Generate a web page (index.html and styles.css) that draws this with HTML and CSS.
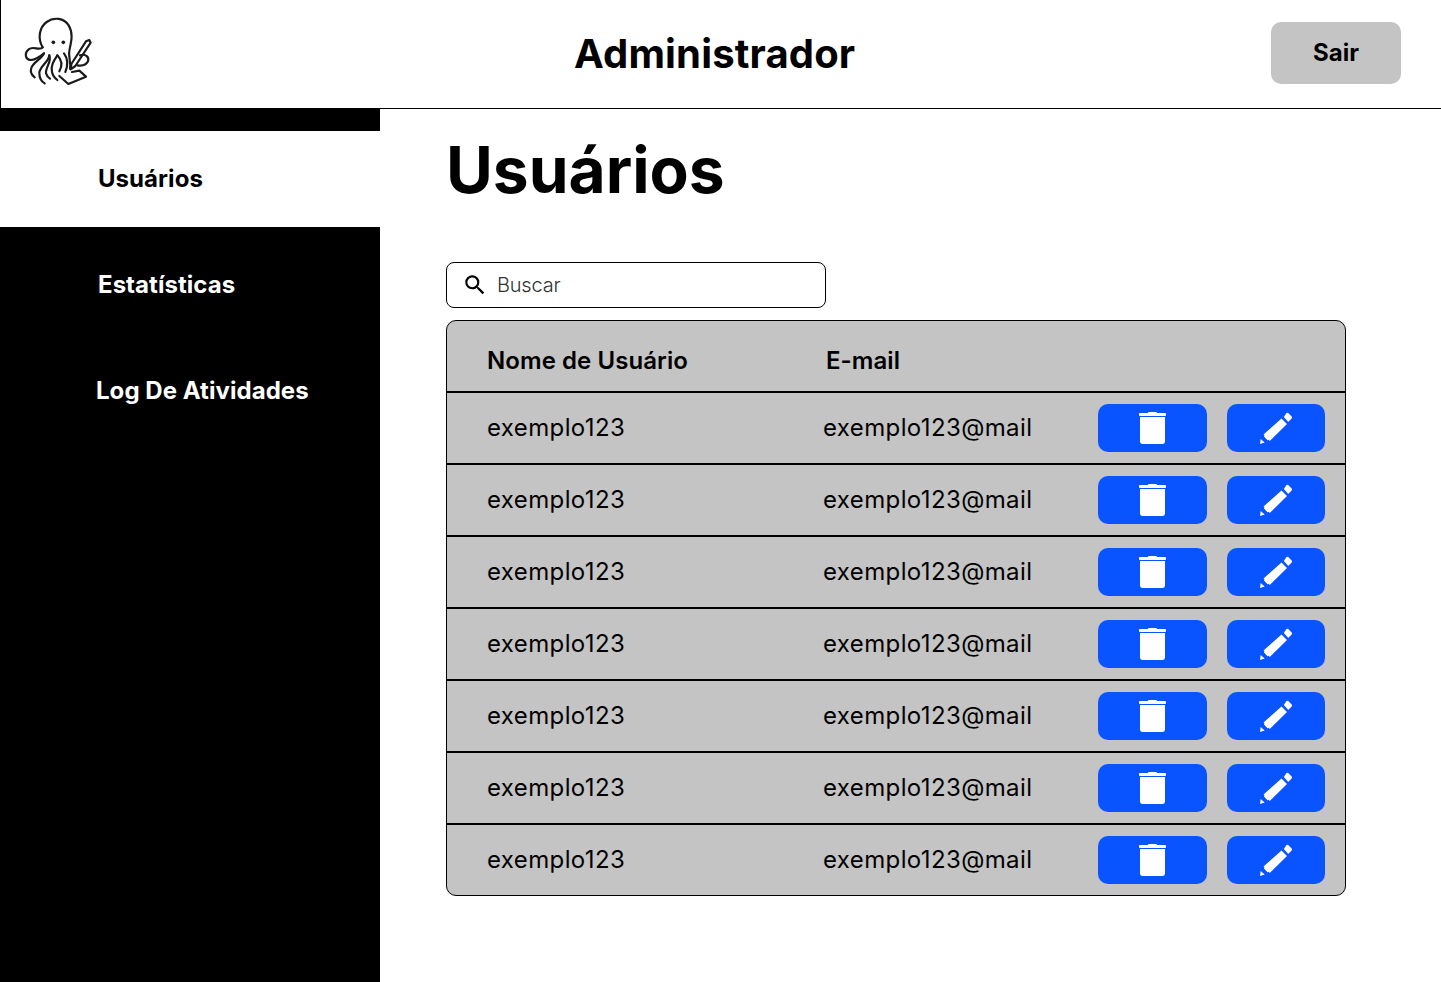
FILE: index.html
```html
<!DOCTYPE html>
<html lang="pt-BR">
<head>
  <meta charset="UTF-8">
  <title>Administrador</title>
  <link rel="stylesheet" href="styles.css">
</head>
<body>
  <svg class="sprites" width="0" height="0">
    <symbol id="icon-trash" viewBox="0 0 27 32">
      <path d="M9 1.2C9 .5 9.5 0 10 0h7c.5 0 1 .5 1 1.200V1h8.200c.4 0 .8.300.8.800v1.400c0 .4-.4.800-.8.800H.8C.4 4 0 3.600 0 3.200V1.800C0 1.300.4 1 .8 1H9z"/>
      <path d="M1 5h25v24.500c0 1.400-1.100 2.500-2.500 2.500h-20C2.100 32 1 30.900 1 29.500V5z"/>
    </symbol>
    <symbol id="icon-edit" viewBox="0 0 32 32">
      <path d="M21.500 6.500 27 12 9.800 29 8.500 27.800 7.500 28.200 4 24.500 4.500 23.500 3.500 22.500z"/>
      <path d="M23.800 5 26.300 1.200C26.900.5 27.700.5 28.300 1L31.600 4.600C32.200 5.200 32.100 6 31.600 6.500L28.300 10z"/>
      <path d="M0 32 .7 27 4.600 30.600z"/>
    </symbol>
  </svg>

  <header class="topbar">
    <svg class="logo" viewBox="0 0 390 324" fill="none" stroke="#1a1a1a" stroke-width="6.500" stroke-linecap="round" stroke-linejoin="round">
      <!-- cabeca -->
      <path d="M128 142C112 115 118 82 140 66C162 50 192 54 206 76C222 102 212 130 208 152C204 170 214 186 210 206"/>
      <circle cx="160" cy="127" r="5.500" fill="#1a1a1a" stroke="none"/>
      <circle cx="190" cy="127" r="5.500" fill="#1a1a1a" stroke="none"/>
      <!-- tentaculos -->
      <path d="M128 142C118 154 100 136 86 148C72 160 76 178 92 180C106 180 120 170 132 160"/>
      <path d="M132 160C124 178 100 186 94 204C90 216 96 226 104 232"/>
      <path d="M148 166C146 186 120 198 118 218C118 232 124 244 134 250"/>
      <path d="M148 166C156 184 136 202 138 220C140 228 144 232 150 236"/>
      <path d="M172 166C160 184 152 198 156 216C158 226 164 234 172 240"/>
      <path d="M172 166C186 180 188 196 178 214"/>
      <path d="M192 160C204 176 204 196 196 216"/>
      <!-- papel -->
      <path d="M178 228 205 252 258 230 238 212 216 216"/>
      <!-- caneta -->
      <path d="M258 124 268 120 272 128 226 198 212 208 214 192z"/>
      <path d="M240 166C258 160 268 172 264 184C258 196 244 198 232 196"/>
    </svg>
    <h1 class="topbar-title">Administrador</h1>
    <button class="btn-exit">Sair</button>
  </header>

  <div class="page">
    <nav class="sidebar">
      <a class="nav-item active">Usuários</a>
      <a class="nav-item">Estatísticas</a>
      <a class="nav-item nav-item-log">Log De Atividades</a>
    </nav>

    <main class="content">
      <h2 class="page-title">Usuários</h2>

      <label class="search">
        <svg class="search-icon" viewBox="0 0 24 24"><path d="M15.500 14h-.79l-.28-.27A6.471 6.471 0 0 0 16 9.500 6.500 6.500 0 1 0 9.500 16c1.610 0 3.090-.59 4.230-1.570l.27.28v.79l5 4.990L20.490 19l-4.990-5zm-6 0C7.010 14 5 11.990 5 9.500S7.010 5 9.500 5 14 7.010 14 9.500 11.990 14 9.500 14z"/></svg>
        <input type="text" placeholder="Buscar">
      </label>

      <div class="table">
        <div class="row row-head">
          <span class="col-name">Nome de Usuário</span>
          <span class="col-mail">E-mail</span>
        </div>
        <div class="row">
          <span class="col-name">exemplo123</span>
          <span class="col-mail">exemplo123@mail</span>
          <button class="btn-icon btn-trash"><svg class="ico-trash"><use href="#icon-trash"/></svg></button>
          <button class="btn-icon btn-edit"><svg class="ico-edit"><use href="#icon-edit"/></svg></button>
        </div>
        <div class="row">
          <span class="col-name">exemplo123</span>
          <span class="col-mail">exemplo123@mail</span>
          <button class="btn-icon btn-trash"><svg class="ico-trash"><use href="#icon-trash"/></svg></button>
          <button class="btn-icon btn-edit"><svg class="ico-edit"><use href="#icon-edit"/></svg></button>
        </div>
        <div class="row">
          <span class="col-name">exemplo123</span>
          <span class="col-mail">exemplo123@mail</span>
          <button class="btn-icon btn-trash"><svg class="ico-trash"><use href="#icon-trash"/></svg></button>
          <button class="btn-icon btn-edit"><svg class="ico-edit"><use href="#icon-edit"/></svg></button>
        </div>
        <div class="row">
          <span class="col-name">exemplo123</span>
          <span class="col-mail">exemplo123@mail</span>
          <button class="btn-icon btn-trash"><svg class="ico-trash"><use href="#icon-trash"/></svg></button>
          <button class="btn-icon btn-edit"><svg class="ico-edit"><use href="#icon-edit"/></svg></button>
        </div>
        <div class="row">
          <span class="col-name">exemplo123</span>
          <span class="col-mail">exemplo123@mail</span>
          <button class="btn-icon btn-trash"><svg class="ico-trash"><use href="#icon-trash"/></svg></button>
          <button class="btn-icon btn-edit"><svg class="ico-edit"><use href="#icon-edit"/></svg></button>
        </div>
        <div class="row">
          <span class="col-name">exemplo123</span>
          <span class="col-mail">exemplo123@mail</span>
          <button class="btn-icon btn-trash"><svg class="ico-trash"><use href="#icon-trash"/></svg></button>
          <button class="btn-icon btn-edit"><svg class="ico-edit"><use href="#icon-edit"/></svg></button>
        </div>
        <div class="row">
          <span class="col-name">exemplo123</span>
          <span class="col-mail">exemplo123@mail</span>
          <button class="btn-icon btn-trash"><svg class="ico-trash"><use href="#icon-trash"/></svg></button>
          <button class="btn-icon btn-edit"><svg class="ico-edit"><use href="#icon-edit"/></svg></button>
        </div>
      </div>
    </main>
  </div>
</body>
</html>
```

FILE: styles.css
```css
* {
  box-sizing: border-box;
}
html, body {
  height: 100%;
}
body {
  margin: 0;
  font-family: Inter, "Liberation Sans", sans-serif;
  color: #000;
  background-color: #fff;
  overflow: hidden;
}
.sprites {
  display: block;
  height: 0;
}
.topbar {
  display: flex;
  align-items: center;
  height: 109px;
  border-left: 1px solid #000;
  border-bottom: 1px solid #000;
}
.logo {
  width: 130px;
  height: 108px;
  margin-left: -1px;
  flex: none;
}
.topbar-title {
  margin: 0 0 2px 444px;
  font-size: 40px;
  font-weight: 700;
  letter-spacing: 0.15px;
}
.btn-exit {
  width: 130px;
  height: 62px;
  margin: -2px 40px 0 auto;
  padding: 0 0 2px;
  border: 0;
  border-radius: 10px;
  background-color: #c4c4c4;
  font: 700 24px Inter, sans-serif;
  color: #000;
}
.page {
  display: flex;
  height: 873px;
}
.sidebar {
  display: flex;
  flex-direction: column;
  gap: 10px;
  width: 380px;
  padding-top: 22px;
  background-color: #000;
}
.nav-item {
  display: flex;
  align-items: center;
  height: 96px;
  padding: 0 0 2px 98px;
  font-size: 24px;
  font-weight: 700;
  letter-spacing: 0.05px;
  color: #fff;
}
.nav-item.active {
  background-color: #fff;
  color: #000;
}
.nav-item-log {
  padding-left: 96px;
}
.content {
  padding-left: 66px;
}
.page-title {
  margin: 22px 0 0;
  height: 131px;
  font-size: 64px;
  line-height: 78px;
  font-weight: 700;
}
.search {
  display: flex;
  align-items: center;
  gap: 9px;
  width: 380px;
  height: 46px;
  padding-left: 15px;
  border: 1px solid #000;
  border-radius: 8px;
}
.search-icon {
  width: 26px;
  height: 26px;
  flex: none;
}
.search input {
  width: 300px;
  border: 0;
  outline: 0;
  padding: 0;
  font: 300 20px Inter, sans-serif;
  letter-spacing: -0.2px;
  color: #000;
}
.search input::placeholder {
  color: #333;
  opacity: 1;
}
.table {
  width: 900px;
  margin-top: 12px;
  border: 1px solid #000;
  border-radius: 10px;
  background-color: #c4c4c4;
  overflow: hidden;
}
.row {
  display: flex;
  align-items: center;
  height: 72px;
  padding-left: 40px;
  border-bottom: 2px solid #000;
  font-size: 24px;
  letter-spacing: 0.38px;
}
.row:last-child {
  height: 70px;
  border-bottom: 0;
}
.row > span {
  margin-bottom: 2px;
}
.row-head {
  padding-top: 10px;
  font-weight: 600;
  letter-spacing: 0.07px;
}
.col-name {
  width: 336px;
}
.col-mail {
  width: 275px;
}
.row-head .col-name {
  width: 339px;
}
.btn-icon {
  display: flex;
  align-items: center;
  justify-content: center;
  height: 48px;
  padding: 0;
  border: 0;
  border-radius: 10px;
  background-color: #0a54ff;
}
.btn-trash {
  width: 109px;
}
.btn-edit {
  width: 98px;
  margin-left: 20px;
}
.btn-icon svg {
  fill: #fff;
}
.ico-trash {
  width: 27px;
  height: 32px;
}
.ico-edit {
  width: 32px;
  height: 32px;
}
```
